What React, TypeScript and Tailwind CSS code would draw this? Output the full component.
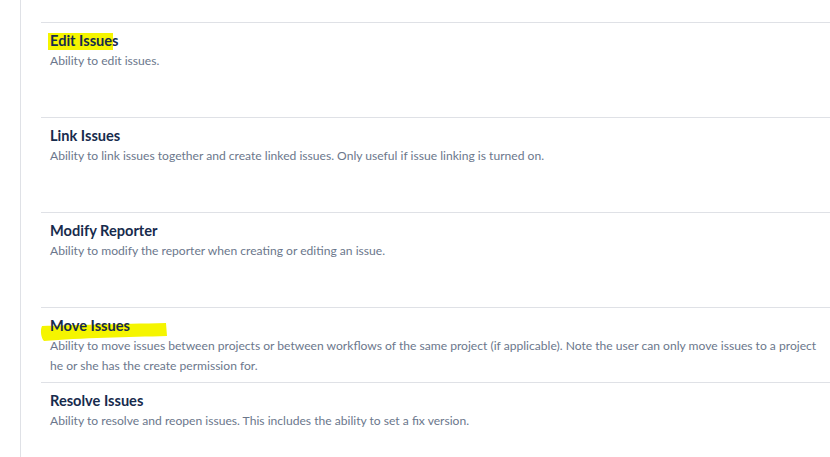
const permissions = [
  { name: 'Edit Issues', desc: 'Ability to edit issues.', h: 'h-[95px]' },
  { name: 'Link Issues', desc: 'Ability to link issues together and create linked issues. Only useful if issue linking is turned on.', h: 'h-[95px]' },
  { name: 'Modify Reporter', desc: 'Ability to modify the reporter when creating or editing an issue.', h: 'h-[95px]' },
  { name: 'Move Issues', desc: 'Ability to move issues between projects or between workflows of the same project (if applicable). Note the user can only move issues to a project he or she has the create permission for.', h: 'h-[75px]' },
  { name: 'Resolve Issues', desc: 'Ability to resolve and reopen issues. This includes the ability to set a fix version.', h: 'h-[75px]' },
];

// yellow highlighter strokes over some titles
function Marker({ kind }: { kind: string }) {
  if (kind === 'Edit Issues') {
    return <span className="absolute left-[-2px] top-[2px] h-[17px] w-[65px] bg-[#f5f500]" />;
  }
  if (kind === 'Move Issues') {
    return (
      <svg className="absolute left-[-10px] top-[4px]" width="128" height="22" viewBox="0 0 128 22">
        <path d="M2 6 C30 5 80 4 126 3 L127 16 C90 17 40 18 4 21 C1 18 0 10 2 6 Z" fill="#f5f500" />
      </svg>
    );
  }
  return null;
}

export default function App() {
  return (
    <div className="w-[830px] h-[457px] bg-white overflow-hidden font-['Lato','Open_Sans',sans-serif]">
      <div className="ml-5 h-full border-l border-[#dfe1e6] pl-5 pt-[22px]">
        {permissions.map(p => (
          <div key={p.name} className={`${p.h} border-t border-[#dfe1e6] pl-[9px] pr-3 pt-[8px]`}>
            <div className="relative">
              <Marker kind={p.name} />
              <h3 className="relative text-[14.6px] leading-5 font-bold text-[#172b4d]">{p.name}</h3>
            </div>
            <p className="text-[12.1px] leading-5 text-[#6b778c]">{p.desc}</p>
          </div>
        ))}
      </div>
    </div>
  );
}
